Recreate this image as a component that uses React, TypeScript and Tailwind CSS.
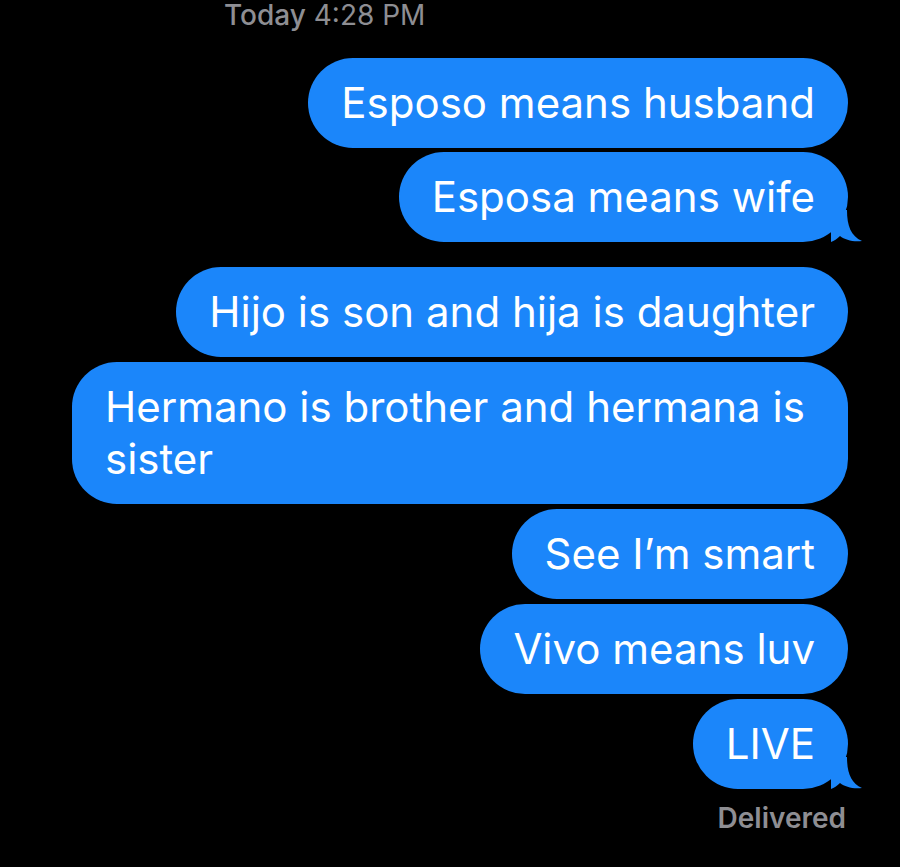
import React from 'react'

interface Message {
  text: string
  tail?: boolean
  gapTop: string
}

const messages: Message[] = [
  { text: 'Esposo means husband', gapTop: 'mt-0' },
  { text: 'Esposa means wife', tail: true, gapTop: 'mt-[4px]' },
  { text: 'Hijo is son and hija is daughter', gapTop: 'mt-[25px]' },
  { text: 'Hermano is brother and hermana is sister', gapTop: 'mt-[5px]' },
  { text: 'See I\u2019m smart', gapTop: 'mt-[5px]' },
  { text: 'Vivo means luv', gapTop: 'mt-[5px]' },
  { text: 'LIVE', tail: true, gapTop: 'mt-[5px]' },
]

const Tail = () => (
  <svg
    className="absolute bottom-0 right-[-15px] h-[32px] w-[32px]"
    viewBox="0 0 32 32"
    fill="#1b86fa"
  >
    <path d="M0 0 L16 0 C16 16 20 26 31 31 C22 32 14 30 9 26 C6 29 3 31 0 32 Z" />
  </svg>
)

const Bubble: React.FC<{ msg: Message }> = ({ msg }) => (
  <div
    className={`relative ${msg.gapTop} max-w-[776px] rounded-[45px] bg-[#1b86fa] px-[33px] py-[19px] text-[42px] leading-[52px] text-white`}
  >
    <span className="relative z-10">{msg.text}</span>
    {msg.tail && <Tail />}
  </div>
)

export default function App() {
  return (
    <div className="min-h-[867px] w-[900px] bg-black font-['Inter','Liberation_Sans',sans-serif]">
      <div className="pl-[224px] pt-[2px] text-[28px] leading-[26px] text-[#8e8e93]">
        <span className="font-medium">Today</span> 4:28 PM
      </div>
      <div className="mt-[30px] flex flex-col items-end pr-[52px]">
        {messages.map((m, i) => (
          <Bubble key={i} msg={m} />
        ))}
        <div className="mt-[13px] pr-[2px] text-[28px] font-semibold leading-[32px] text-[#8e8e93]">
          Delivered
        </div>
      </div>
    </div>
  )
}
